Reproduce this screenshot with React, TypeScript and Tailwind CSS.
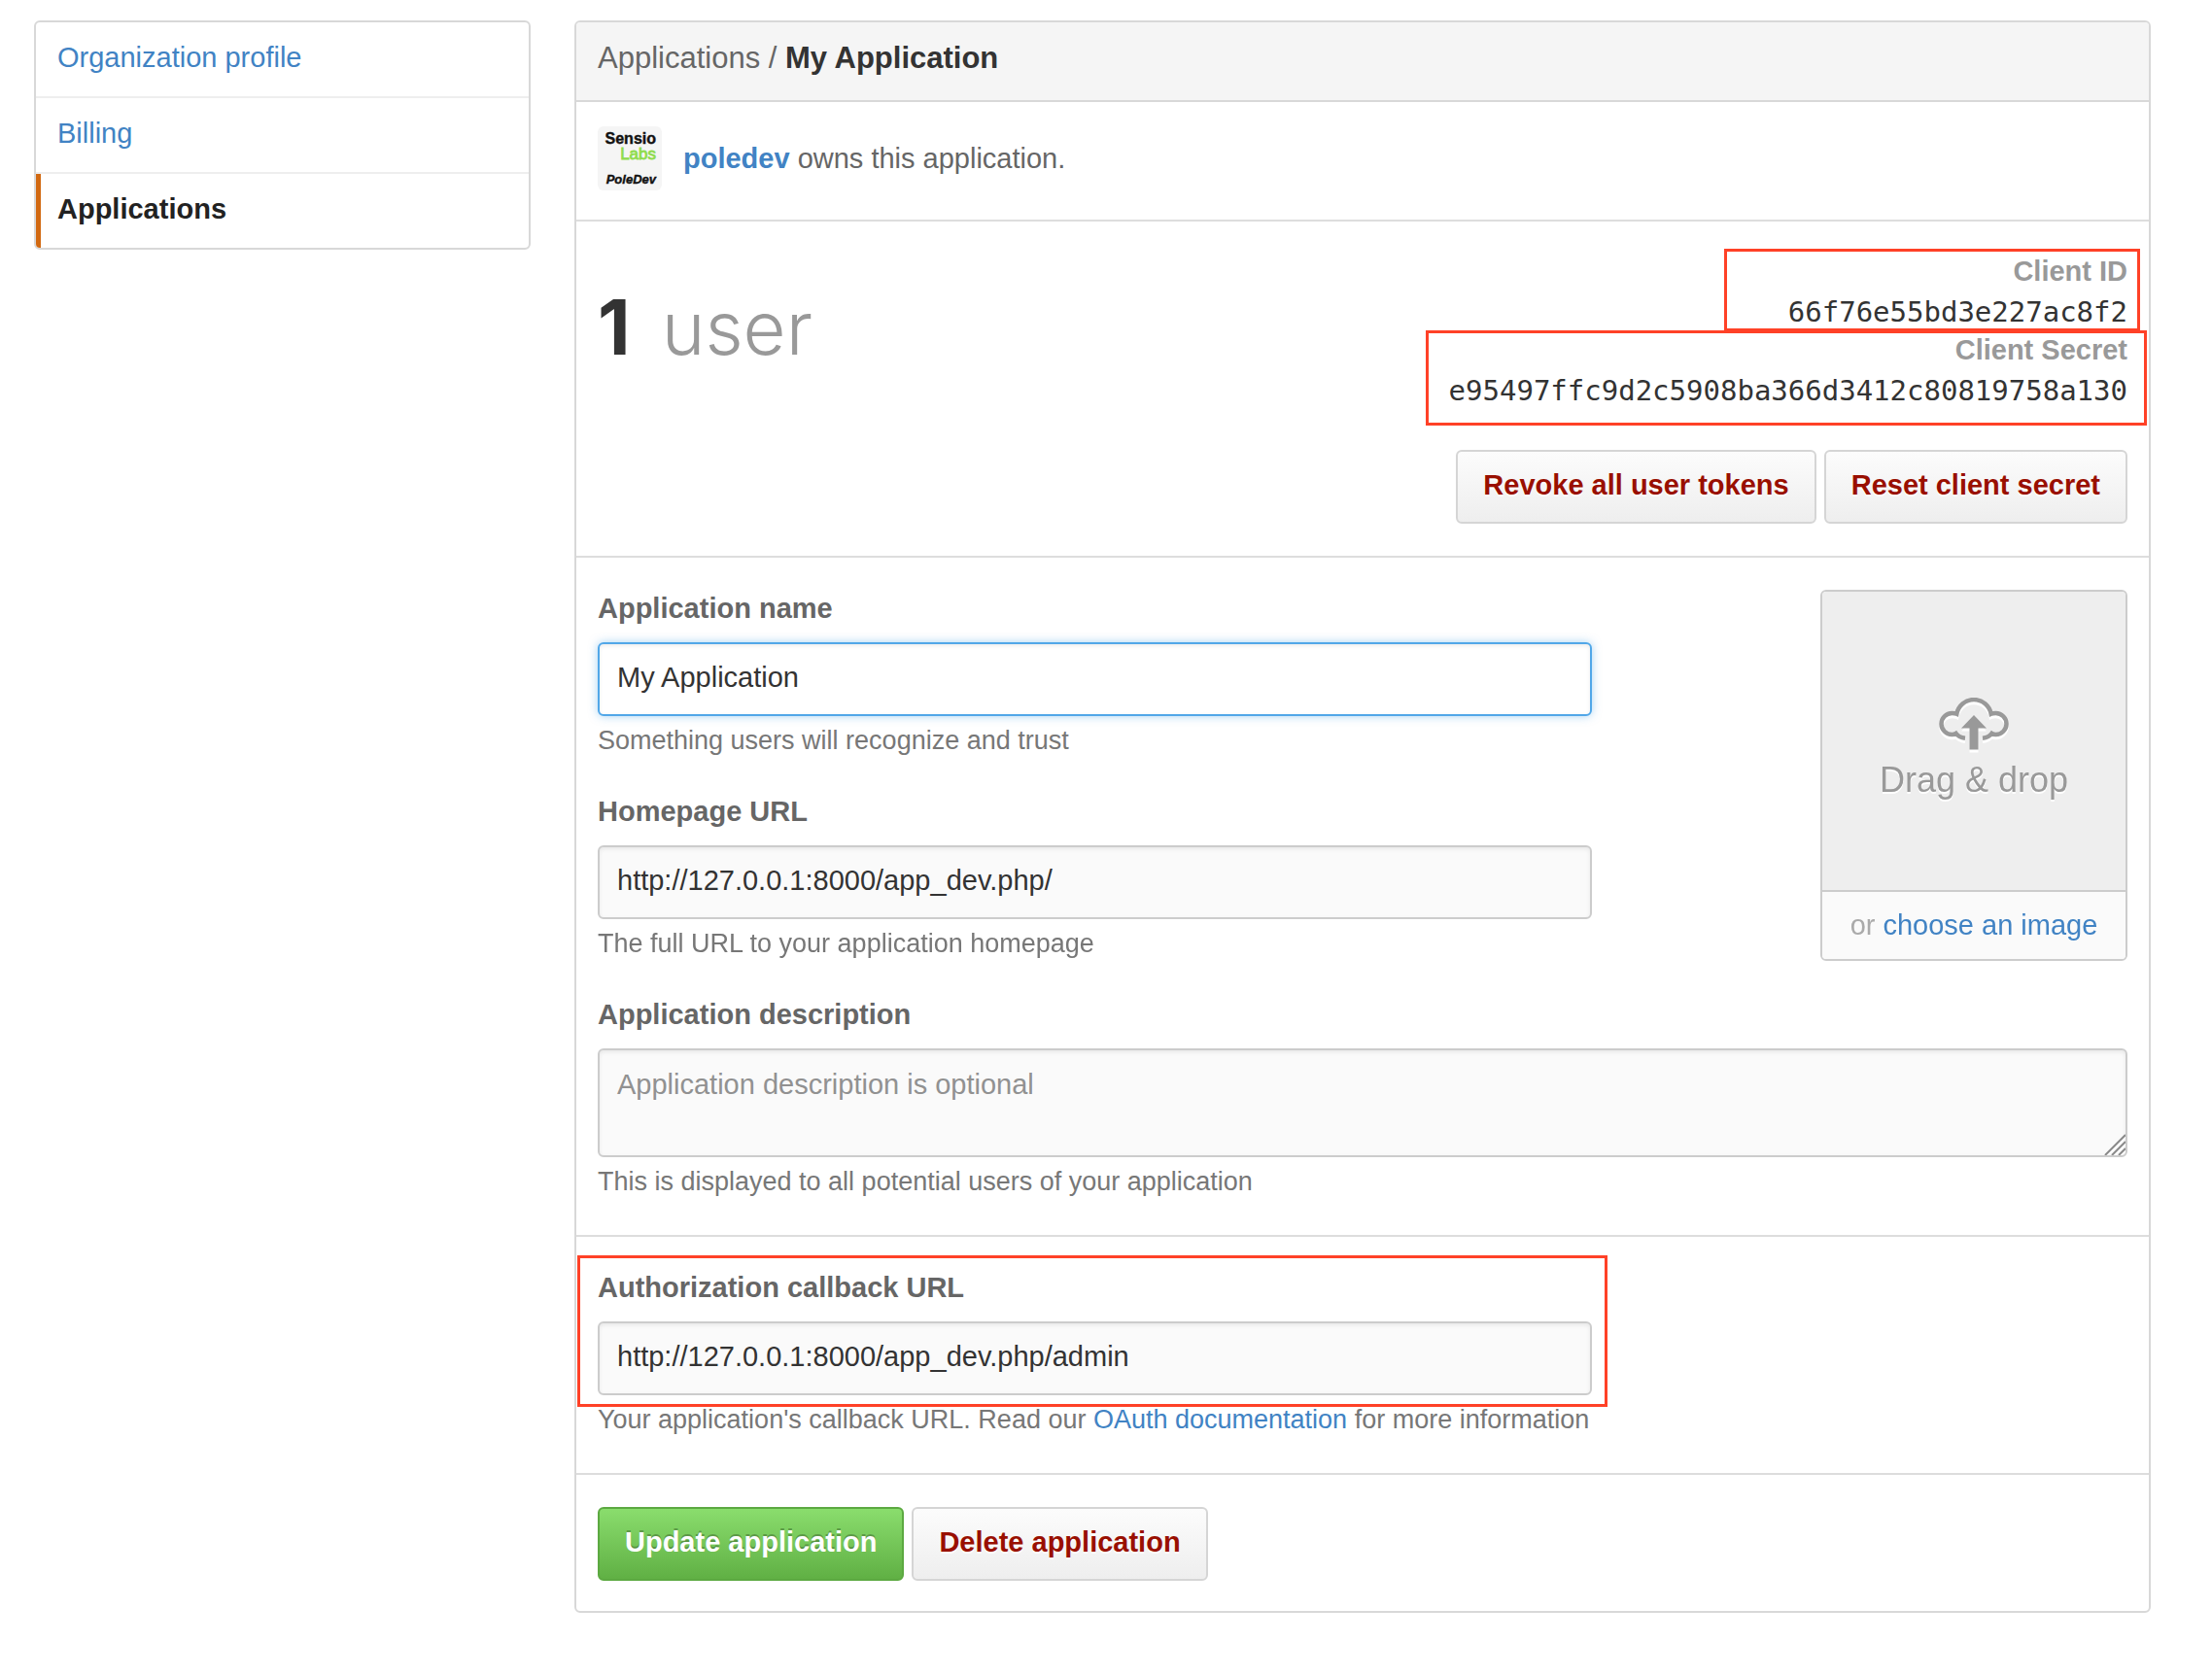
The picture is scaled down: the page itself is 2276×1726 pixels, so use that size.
import { useState, type ReactNode } from "react";

const button =
  "cursor-pointer rounded-md border-2 px-[26px] pb-1 text-[29px] leading-[68px] font-bold whitespace-nowrap";
const dangerButton =
  "border-[#d5d5d5] bg-linear-to-b from-[#fcfcfc] to-[#eeeeee] text-[#990f00] [text-shadow:0_2px_0_rgba(255,255,255,0.9)]";
const primaryButton =
  "border-[#5ca941] bg-linear-to-b from-[#8add6d] to-[#60b044] text-white [text-shadow:0_-2px_0_rgba(0,0,0,0.25)]";
const textField =
  "block h-[76px] w-full rounded-md border-2 border-[#cccccc] bg-[#fafafa] px-[18px] pb-1 text-[29px] text-[#333333] shadow-[inset_0_2px_4px_rgba(0,0,0,0.075)] outline-none focus:border-[#51a7e8] focus:bg-white focus:shadow-[inset_0_2px_4px_rgba(0,0,0,0.075),0_0_10px_rgba(81,167,232,0.5)]";

function Highlight({ className }: { className: string }) {
  return (
    <span
      aria-hidden="true"
      className={`pointer-events-none absolute border-3 border-[#ff4127] ${className}`}
    />
  );
}

function Label({ htmlFor, children }: { htmlFor: string; children: ReactNode }) {
  return (
    <label htmlFor={htmlFor} className="mb-[15px] block text-[29px] leading-10 font-bold">
      {children}
    </label>
  );
}

function Note({ children }: { children: ReactNode }) {
  return <p className="mt-[5px] text-[27px] leading-10 text-[#777777]">{children}</p>;
}

function Avatar() {
  return (
    <svg viewBox="0 0 66 66" className="size-[66px] shrink-0" role="img" aria-label="poledev">
      <rect width="66" height="66" rx="6" fill="#f5f5f5" />
      <g textAnchor="end" fontFamily="Liberation Sans, Arial, sans-serif">
        <text x="60" y="18" fontSize="16" fontWeight="700" fill="#111111" stroke="#111111" strokeWidth="0.4">Sensio</text>
        <text x="60" y="34" fontSize="17" fill="#8fdc4e" stroke="#8fdc4e" strokeWidth="0.8">Labs</text>
        <text
          x="60"
          y="59"
          fontSize="13"
          fontWeight="700"
          fontStyle="italic"
          fill="#111111"
          stroke="#111111"
          strokeWidth="0.4"
        >
          PoleDev
        </text>
      </g>
    </svg>
  );
}

function CloudShape() {
  return (
    <>
      <path
        d="M27 41.8 C22 41.3 19 39 17.5 36.8 C16 37.8 14.5 38 13.5 38 A11 11 0 0 1 13.5 16 C15.5 16 17 16.2 18.3 16.8 A18 18 0 0 1 53.7 16.8 C55 16.2 56.5 16 58.5 16 A11 11 0 0 1 58.5 38 C57.5 38 56 37.8 54.5 36.8 C53 39 50 41.3 45 41.8"
        fill="none"
        stroke="currentColor"
        strokeWidth="4.5"
      />
      <path d="M36 18 L49 31.5 H40.5 V53.5 H31.5 V31.5 H23 Z" fill="currentColor" />
    </>
  );
}

function CloudUploadIcon() {
  return (
    <svg viewBox="0 0 72 58" className="h-[58px] w-[72px]" aria-hidden="true">
      <g className="text-white" transform="translate(0 3)">
        <CloudShape />
      </g>
      <g className="text-[#999999]">
        <CloudShape />
      </g>
    </svg>
  );
}

function ResizeGrip() {
  return (
    <svg
      viewBox="0 0 22 22"
      className="pointer-events-none absolute right-0.5 bottom-0.5 size-[22px]"
      fill="none"
      strokeWidth="2"
      aria-hidden="true"
    >
      <path d="M3 22 L22 3 M10 22 L22 10 M17 22 L22 17" stroke="#ffffff" />
      <path d="M1 22 L22 1 M8 22 L22 8 M15 22 L22 15" stroke="#8a8a8a" />
    </svg>
  );
}

export default function App() {
  const [name, setName] = useState("My Application");
  const [homepage, setHomepage] = useState("http://127.0.0.1:8000/app_dev.php/");
  const [callback, setCallback] = useState("http://127.0.0.1:8000/app_dev.php/admin");
  const [description, setDescription] = useState("");

  return (
    <div className="flex min-h-screen items-start gap-[45px] bg-white pt-[21px] pr-[63px] pb-16 pl-[35px] font-['Liberation_Sans',Arial,Helvetica,sans-serif] text-[29px] text-[#666666]">
      <nav className="w-[511px] shrink-0 overflow-hidden rounded-md border-2 border-[#d8d8d8] leading-[72px]">
        <a href="#profile" className="block border-b-2 border-[#eeeeee] px-[22px] pb-1 text-[#4183c4]">
          Organization profile
        </a>
        <a href="#billing" className="block border-b-2 border-[#eeeeee] px-[22px] pb-1 text-[#4183c4]">
          Billing
        </a>
        <a
          href="#applications"
          aria-current="page"
          className="block border-l-5 border-[#d26911] px-[17px] pb-1 font-bold text-[#222222]"
        >
          Applications
        </a>
      </nav>

      <main className="min-w-0 flex-1 rounded-md border-2 border-[#d8d8d8]">
        <h1 className="rounded-t-sm border-b-2 border-[#d8d8d8] bg-[#f5f5f5] px-[22px] pb-1.5 text-[31px] leading-[74px]">
          Applications / <strong className="text-[#333333]">My Application</strong>
        </h1>

        <section className="flex items-start gap-[22px] border-b-2 border-[#dddddd] px-[22px] pt-[25px] pb-[30px]">
          <Avatar />
          <p className="pt-[13px] leading-10">
            <a href="#poledev" className="font-bold text-[#4183c4]">poledev</a> owns this application.
          </p>
        </section>

        <section className="flex justify-between border-b-2 border-[#dddddd] px-[22px] pt-8 pb-[33px]">
          <p className="flex items-baseline gap-8 pt-[37px] font-['Inter',sans-serif] text-[78px] leading-20 text-[#999999]">
            <strong className="text-[#333333]">1</strong>{" "}
            <span className="text-[76px] font-light">user</span>
          </p>
          <div className="flex flex-col items-end">
            <dl className="flex flex-col items-end text-right leading-[38px]">
              <div className="relative">
                <dt className="font-bold text-[#999999]">Client ID</dt>
                <dd className="mt-1 font-['DejaVu_Sans_Mono',monospace] text-[#333333]">66f76e55bd3e227ac8f2</dd>
                <Highlight className="-top-1 -right-[13px] -bottom-px -left-[66px]" />
              </div>
              <div className="relative mt-px">
                <dt className="font-bold text-[#999999]">Client Secret</dt>
                <dd className="mt-1 font-['DejaVu_Sans_Mono',monospace] text-[#333333]">
                  e95497ffc9d2c5908ba366d3412c80819758a130
                </dd>
                <Highlight className="-top-px -right-5 -bottom-[17px] -left-6" />
              </div>
            </dl>
            <div className="mt-[42px] flex gap-2">
              <button type="button" className={`${button} ${dangerButton}`}>Revoke all user tokens</button>
              <button type="button" className={`${button} ${dangerButton}`}>Reset client secret</button>
            </div>
          </div>
        </section>

        <form onSubmit={(e) => e.preventDefault()}>
          <div className="flex flex-col gap-[33px] border-b-2 border-[#dddddd] px-[22px] pt-8 pb-[35px]">
            <div className="flex items-start justify-between">
              <div className="flex w-[65%] flex-col gap-[33px]">
                <div>
                  <Label htmlFor="name">Application name</Label>
                  <input
                    id="name"
                    type="text"
                    autoFocus
                    className={`${textField} caret-transparent`}
                    value={name}
                    onChange={(e) => setName(e.target.value)}
                  />
                  <Note>Something users will recognize and trust</Note>
                </div>
                <div>
                  <Label htmlFor="homepage">Homepage URL</Label>
                  <input
                    id="homepage"
                    type="text"
                    className={textField}
                    value={homepage}
                    onChange={(e) => setHomepage(e.target.value)}
                  />
                  <Note>The full URL to your application homepage</Note>
                </div>
              </div>

              <div className="mt-px w-[316px] overflow-hidden rounded-md border-2 border-[#cccccc] text-center">
                <div className="flex h-[309px] flex-col items-center border-b-2 border-[#cccccc] bg-[#eeeeee] pt-[109px]">
                  <CloudUploadIcon />
                  <p className="text-[36px] leading-[54px] text-[#999999] [text-shadow:0_2px_0_#ffffff]">Drag &amp; drop</p>
                </div>
                <p className="bg-[#fafafa] pb-px leading-[68px] text-[#aaaaaa]">
                  or <a href="#choose" className="text-[#4183c4]">choose an image</a>
                </p>
              </div>
            </div>

            <div>
              <Label htmlFor="description">Application description</Label>
              <div className="relative">
                <textarea
                  id="description"
                  placeholder="Application description is optional"
                  className="block h-28 w-full resize-none rounded-md border-2 border-[#cccccc] bg-[#fafafa] px-[18px] py-[15px] text-[29px] leading-10 text-[#333333] shadow-[inset_0_2px_4px_rgba(0,0,0,0.075)] outline-none placeholder:text-[#919191]"
                  value={description}
                  onChange={(e) => setDescription(e.target.value)}
                />
                <ResizeGrip />
              </div>
              <Note>This is displayed to all potential users of your application</Note>
            </div>
          </div>

          <div className="border-b-2 border-[#dddddd] px-[22px] pt-8 pb-[35px]">
            <div className="relative w-[65%]">
              <Label htmlFor="callback">Authorization callback URL</Label>
              <input
                id="callback"
                type="text"
                className={textField}
                value={callback}
                onChange={(e) => setCallback(e.target.value)}
              />
              <Highlight className="-top-[13px] -right-4 -bottom-3 -left-[21px]" />
            </div>
            <Note>
              Your application's callback URL. Read our{" "}
              <a href="#oauth" className="text-[#4183c4]">OAuth documentation</a> for more information
            </Note>
          </div>

          <div className="flex gap-2 px-[22px] pt-[33px] pb-[31px]">
            <button type="submit" className={`${button} ${primaryButton}`}>Update application</button>
            <button type="button" className={`${button} ${dangerButton}`}>Delete application</button>
          </div>
        </form>
      </main>
    </div>
  );
}
